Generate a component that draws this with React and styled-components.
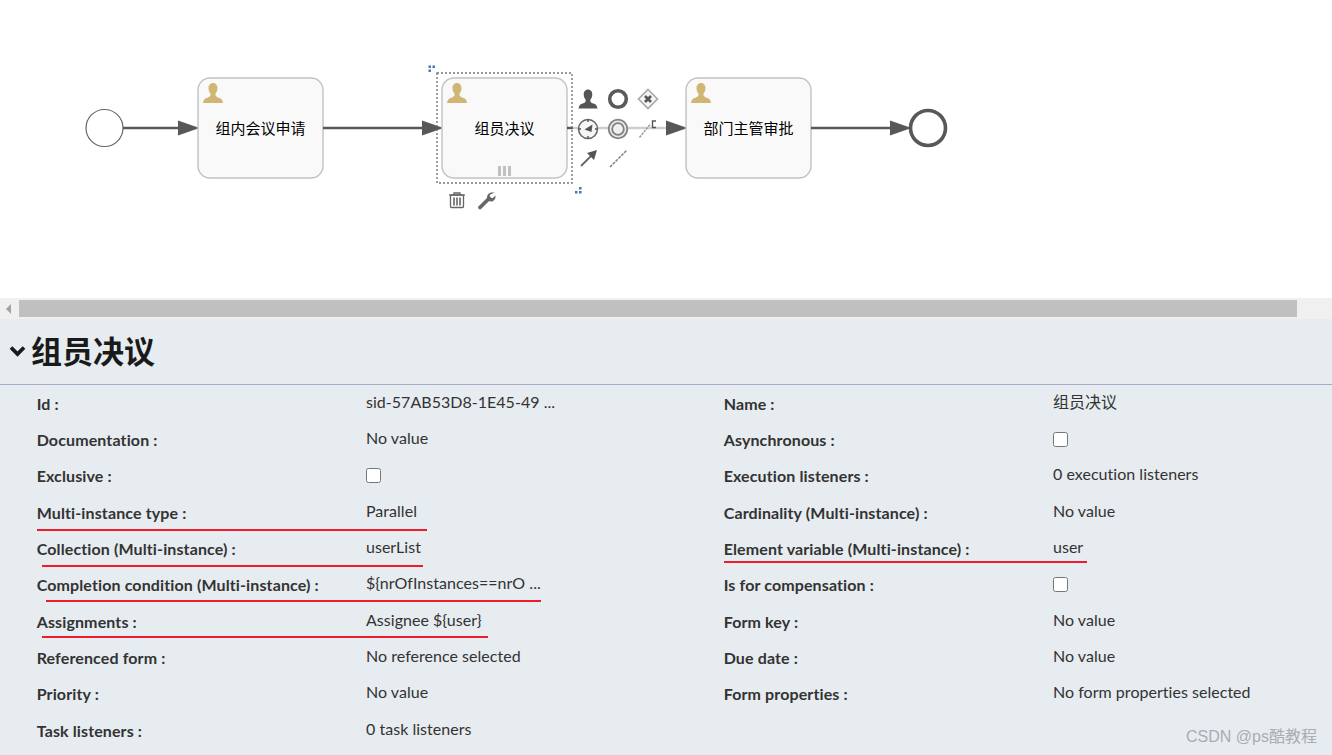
import React from 'react';
import styled, {createGlobalStyle} from 'styled-components';

const GlobalStyle = createGlobalStyle`
    html, body {
        margin: 0;
        padding: 0;
        background: #fff;
    }
    body {
        font-family: Lato, "Noto Sans CJK SC", sans-serif;
        overflow: hidden;
    }
`;

const Page = styled.div`
    position: relative;
    width: 1332px;
    height: 755px;
    display: flex;
    flex-direction: column;
    overflow: hidden;
`;

const Canvas = styled.div`
    height: 298px;
    flex-shrink: 0;
    background: #fff;
`;

const Diagram = styled.svg`
    display: block;
    width: 1332px;
    height: 298px;
`;

const TaskLabel = styled.text`
    font-family: "Noto Sans CJK SC", sans-serif;
    font-size: 15px;
    fill: #000;
    text-anchor: middle;
`;

const ScrollTrack = styled.div`
    height: 21px;
    flex-shrink: 0;
    display: flex;
    align-items: center;
    background: #f0f0f0;
`;

const ScrollButton = styled.div`
    width: 19px;
    height: 100%;
    display: flex;
    align-items: center;
    padding-left: 6px;
    box-sizing: border-box;
    &::before {
        content: '';
        border-style: solid;
        border-width: 5px 5px 5px 0;
        border-color: transparent #a3a3a3 transparent transparent;
    }
`;

const ScrollThumb = styled.div`
    width: 1278px;
    height: 17px;
    background: #c0c0c0;
`;

const Panel = styled.div`
    flex: 1;
    background: #e7ecf0;
`;

const PanelHeader = styled.div`
    height: 66px;
    box-sizing: border-box;
    display: flex;
    align-items: center;
    gap: 5px;
    padding: 0 0 4px 9px;
    border-bottom: 1px solid #a5abc6;
`;

const Chevron = styled.svg`
    width: 17px;
    height: 12px;
    margin-top: 3px;
`;

const Title = styled.h1`
    margin: 0;
    font-family: "Noto Sans CJK SC", sans-serif;
    font-size: 31px;
    font-weight: 700;
    line-height: 1;
    color: #1a1a1a;
`;

const Fields = styled.div`
    display: grid;
    grid-template-columns: 687px 1fr;
    padding-left: 36.7px;
`;

const Column = styled.div`
    display: grid;
    grid-auto-rows: 36.33px;
`;

const Field = styled.div`
    display: grid;
    grid-template-columns: 329.3px 1fr;
    align-items: center;
`;

const Label = styled.div`
    font-size: 16px;
    font-weight: 700;
    letter-spacing: 0.12px;
    color: #333;
    white-space: nowrap;
`;

const Value = styled.div`
    font-size: 16px;
    letter-spacing: 0.03px;
    color: #333;
    white-space: nowrap;
    padding-bottom: ${p => (p.$check ? 0 : 4)}px;
`;

const Check = styled.input`
    display: block;
    width: 15px;
    height: 15px;
    margin: 0;
`;

const RedLine = styled.div`
    position: absolute;
    left: ${p => p.$left}px;
    top: ${p => p.$top}px;
    width: ${p => p.$width}px;
    height: 2px;
    background: #ee1c2e;
`;

const Watermark = styled.div`
    position: absolute;
    right: 15px;
    bottom: 8px;
    font-family: "Liberation Sans", "Noto Sans CJK SC", sans-serif;
    font-size: 16px;
    color: #a9adb1;
    white-space: nowrap;
`;

const USER_PATH = 'M10 0C13 0 14.7 2.5 14.5 5.5C14.3 8 13.5 9.5 12.5 10.5V12.5C13 13.5 15 14.5 17 15.3C18.5 16 19.5 17 20 20H0C.5 17 1.5 16 3 15.3C5 14.5 7 13.5 7.5 12.5V10.5C6.5 9.5 5.7 8 5.5 5.5C5.3 2.5 7 0 10 0Z';

const UserIcon = ({x, y, size = 20, color = '#d1b575'}) => (
    <path d={USER_PATH} fill={color} transform={`translate(${x} ${y}) scale(${size / 20})`}/>
);

const Task = ({x, label}) => (
    <g>
        <rect x={x} y={78} width={125} height={100} rx={12} fill="#f9f9f9" stroke="#c2c2c2" strokeWidth={1.4}/>
        <UserIcon x={x + 5} y={83}/>
        <TaskLabel x={x + 62.5} y={133.5}>{label}</TaskLabel>
    </g>
);

const Flow = ({x1, x2}) => (
    <g>
        <line x1={x1} y1={128} x2={x2 - 18} y2={128} stroke="#585858" strokeWidth={2.4}/>
        <path d={`M${x2 - 20} 120.5L${x2 + 1.5} 128L${x2 - 20} 135.5Z`} fill="#585858"/>
    </g>
);

const Handle = ({x, y}) => (
    <g fill="#4a77b4">
        <rect x={x} y={y} width={2.5} height={2.5}/>
        <rect x={x + 4} y={y} width={2.5} height={2.5}/>
        <rect x={x} y={y + 4} width={2.5} height={2.5}/>
    </g>
);

const HandleFlip = ({x, y}) => (
    <g fill="#4a77b4">
        <rect x={x + 4} y={y} width={2.5} height={2.5}/>
        <rect x={x} y={y + 4} width={2.5} height={2.5}/>
        <rect x={x + 4} y={y + 4} width={2.5} height={2.5}/>
    </g>
);

const Palette = () => (
    <g>
        <UserIcon x={578.5} y={89.5} size={19} color="#555"/>
        <circle cx={618} cy={99} r={8.3} fill="none" stroke="#5a5a5a" strokeWidth={3.6}/>
        <path d="M648 89.5L657.5 99L648 108.5L638.5 99Z" fill="#f4f4f4" stroke="#a8a8a8" strokeWidth={1.6}/>
        <path d="M645 96L651 102M651 96L645 102" stroke="#555" strokeWidth={2.6}/>

        <circle cx={588} cy={129} r={9.5} fill="#f6f6f6" stroke="#666" strokeWidth={1.5}/>
        <path d="M588 119.500V122M588 136V138.500M578.500 129H581M595 129H597.500" stroke="#555" strokeWidth={1.4}/>
        <path d="M584.500 129.500L592.500 124.500L591.500 132Z" fill="#555"/>
        <circle cx={618} cy={129} r={9.3} fill="#e8e8e8" stroke="#808080" strokeWidth={1.8}/>
        <circle cx={618} cy={129} r={5.8} fill="#f0f0f0" stroke="#808080" strokeWidth={1.8}/>
        <path d="M639.500 137.500L650.500 124" stroke="#999" strokeWidth={1.5} strokeDasharray="2.500 1"/>
        <path d="M656 121H652.500V127.500H656" fill="none" stroke="#555" strokeWidth={1.4}/>

        <path d="M581 166L592 155" stroke="#666" strokeWidth={1.8}/>
        <path d="M597 150L594 160L587 153Z" fill="#555"/>
        <path d="M610 167L627 150" stroke="#8a8a8a" strokeWidth={1.6} strokeDasharray="3 1"/>
    </g>
);

const TrashIcon = () => (
    <g fill="none" stroke="#666" strokeWidth={1.3}>
        <path d="M449 195H465"/>
        <path d="M454 195V193H460V195"/>
        <rect x={450.500} y={195} width={13} height={12.500} rx={1}/>
        <path d="M454 197.500V205.500M457 197.500V205.500M460 197.500V205.500" strokeWidth={1.6}/>
    </g>
);

const WrenchIcon = () => (
    <g>
        <path d="M480 207.500L489 198.500" stroke="#666" strokeWidth={3.8} strokeLinecap="round"/>
        <path d="M494.500 192.800C491 191.500 487 193.500 487 197.500C487 200.500 490.500 202.500 493 201C495 200 495.800 197.500 495.500 195.500L492.500 198.300L489.800 197.300L489.800 194.800Z" fill="#666"/>
    </g>
);

const Flowchart = () => (
    <Diagram viewBox="0 0 1332 298">
        <circle cx={104.500} cy={128} r={18.500} fill="#fff" stroke="#666" strokeWidth={1.2}/>
        <Flow x1={123} x2={198}/>
        <Task x={198} label="组内会议申请"/>
        <Flow x1={323} x2={442}/>
        <Task x={442} label="组员决议"/>
        <line x1={567} y1={128} x2={573} y2={128} stroke="#585858" strokeWidth={2.4}/>
        <line x1={573} y1={128} x2={666} y2={128} stroke="#cfcfcf" strokeWidth={2.4}/>
        <path d="M666 120.500L687.500 128L666 135.500Z" fill="#585858"/>
        <Task x={686} label="部门主管审批"/>
        <Flow x1={811} x2={910}/>
        <circle cx={928} cy={128} r={17.500} fill="#fff" stroke="#585858" strokeWidth={3.6}/>

        <g fill="#c0c0c0">
            <rect x={498} y={166} width={3} height={10}/>
            <rect x={503} y={166} width={3} height={10}/>
            <rect x={508} y={166} width={3} height={10}/>
        </g>
        <rect x={437} y={73} width={135} height={110} fill="none" stroke="#777" strokeWidth={1.4} strokeDasharray="2 2"/>
        <Handle x={428.500} y={65.500}/>
        <HandleFlip x={575} y={187}/>
        <Palette/>
        <TrashIcon/>
        <WrenchIcon/>
    </Diagram>
);

const CHECK = Symbol('check');

const LEFT_FIELDS = [
    ['Id', 'sid-57AB53D8-1E45-49 ...'],
    ['Documentation', 'No value'],
    ['Exclusive', CHECK],
    ['Multi-instance type', 'Parallel'],
    ['Collection (Multi-instance)', 'userList'],
    ['Completion condition (Multi-instance)', '${nrOfInstances==nrO ...'],
    ['Assignments', 'Assignee ${user}'],
    ['Referenced form', 'No reference selected'],
    ['Priority', 'No value'],
    ['Task listeners', '0 task listeners'],
];

const RIGHT_FIELDS = [
    ['Name', '组员决议'],
    ['Asynchronous', CHECK],
    ['Execution listeners', '0 execution listeners'],
    ['Cardinality (Multi-instance)', 'No value'],
    ['Element variable (Multi-instance)', 'user'],
    ['Is for compensation', CHECK],
    ['Form key', 'No value'],
    ['Due date', 'No value'],
    ['Form properties', 'No form properties selected'],
];

const RED_LINES = [
    {left: 37, top: 529, width: 390},
    {left: 42, top: 565, width: 381},
    {left: 46, top: 600, width: 495},
    {left: 42, top: 636, width: 446},
    {left: 724, top: 561, width: 363},
];

const renderColumn = (fields) => (
    <Column>
        {fields.map(([label, value]) => (
            <Field key={label}>
                <Label>{label} :</Label>
                {value === CHECK
                    ? <Value $check><Check type="checkbox" readOnly/></Value>
                    : <Value>{value}</Value>}
            </Field>
        ))}
    </Column>
);

const App = () => (
    <Page>
        <GlobalStyle/>
        <Canvas>
            <Flowchart/>
        </Canvas>
        <ScrollTrack>
            <ScrollButton/>
            <ScrollThumb/>
        </ScrollTrack>
        <Panel>
            <PanelHeader>
                <Chevron viewBox="0 0 17 12">
                    <path d="M2 2.500L8.500 9L15 2.500" fill="none" stroke="#1a1a1a" strokeWidth={3.8}/>
                </Chevron>
                <Title>组员决议</Title>
            </PanelHeader>
            <Fields>
                {renderColumn(LEFT_FIELDS)}
                {renderColumn(RIGHT_FIELDS)}
            </Fields>
        </Panel>
        {RED_LINES.map(line => (
            <RedLine key={line.top} $left={line.left} $top={line.top} $width={line.width}/>
        ))}
        <Watermark>CSDN @ps酷教程</Watermark>
    </Page>
);

export default App;
